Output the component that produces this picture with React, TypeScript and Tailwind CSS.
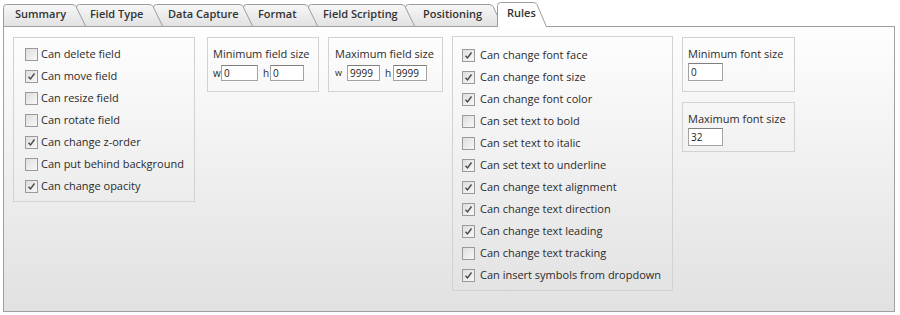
import React from "react";

const tabs = [
  { label: "Summary", w: 83, pl: 12 },
  { label: "Field Type", w: 87, pl: 14 },
  { label: "Data Capture", w: 100, pl: 15 },
  { label: "Format", w: 75, pl: 15 },
  { label: "Field Scripting", w: 107, pl: 15 },
  { label: "Positioning", w: 98, pl: 18 },
];

const fieldRules = [
  { label: "Can delete field", on: false },
  { label: "Can move field", on: true },
  { label: "Can resize field", on: false },
  { label: "Can rotate field", on: false },
  { label: "Can change z-order", on: true },
  { label: "Can put behind background", on: false },
  { label: "Can change opacity", on: true },
];

const textRules = [
  { label: "Can change font face", on: true },
  { label: "Can change font size", on: true },
  { label: "Can change font color", on: true },
  { label: "Can set text to bold", on: false },
  { label: "Can set text to italic", on: false },
  { label: "Can set text to underline", on: true },
  { label: "Can change text alignment", on: true },
  { label: "Can change text direction", on: true },
  { label: "Can change text leading", on: true },
  { label: "Can change text tracking", on: false },
  { label: "Can insert symbols from dropdown", on: true },
];

// tab outline: straight left side, slanted right side
function TabShape({ w, h, active, id }: { w: number; h: number; active?: boolean; id: string }) {
  const d = `M0.5 ${h} V3.5 Q0.5 0.5 3.5 0.5 H${w - 14} Q${w - 11} 0.5 ${w - 10} 2.5 L${w - 0.5} ${h}`;
  return (
    <svg className="absolute inset-0" width={w} height={h} viewBox={`0 0 ${w} ${h}`}>
      <defs>
        <linearGradient id={id} x1="0" y1="0" x2="0" y2="1">
          <stop offset="0" stopColor={active ? "#ffffff" : "#f7f7f7"} />
          <stop offset="1" stopColor={active ? "#ffffff" : "#e2e2e2"} />
        </linearGradient>
      </defs>
      <path d={d} fill={`url(#${id})`} stroke="#9c9c9c" strokeWidth="1" />
      {active && <rect x="1" y={h - 1} width={w - 2} height="1" fill="#ffffff" />}
    </svg>
  );
}

function Check({ on }: { on: boolean }) {
  return (
    <span className="relative flex h-[13px] w-[13px] shrink-0 items-center justify-center border border-[#9a9a9a] bg-gradient-to-br from-[#dedede] to-[#f8f8f8]">
      {on && (
        <svg width="11" height="11" viewBox="0 0 11 11">
          <path d="M2.5 5.8 L4.5 8 L8.5 2.5" fill="none" stroke="#4a4a4a" strokeWidth="1.4" />
        </svg>
      )}
    </span>
  );
}

function Row({ label, on, gap }: { label: string; on: boolean; gap: string }) {
  return (
    <div className={`flex h-[22px] items-center ${gap}`}>
      <Check on={on} />
      <span className="whitespace-nowrap">{label}</span>
    </div>
  );
}

function Field({ value, w, h }: { value: string; w: string; h: string }) {
  return (
    <div className={`${w} ${h} flex items-center border border-[#a3a3a3] border-t-[#7f7f7f] bg-white pl-[2px] text-[10px] leading-none text-[#222]`}>
      {value}
    </div>
  );
}

export default function App() {
  return (
    <div className="h-[315px] w-[900px] bg-white text-[11px] text-[#2b2b2b]" style={{ fontFamily: '"Open Sans", "Liberation Sans", sans-serif' }}>
      {/* tab strip */}
      <div className="relative z-10 flex h-[26px] items-end pl-[3px]">
        {tabs.map((t, i) => (
          <div
            key={t.label}
            className={`relative h-[22px] shrink-0 ${i > 0 ? "-ml-[10px]" : ""}`}
            style={{ width: t.w, zIndex: 10 - i, paddingLeft: t.pl }}
          >
            <TabShape w={t.w} h={22} id={`tab${i}`} />
            <span className="relative flex h-full items-center whitespace-nowrap pb-[1px] font-semibold text-[#333]">{t.label}</span>
          </div>
        ))}
        <div className="relative z-20 -mb-[1px] -ml-[6px] h-[25px] w-[50px] shrink-0 pl-[10px]">
          <TabShape w={50} h={25} active id="tabactive" />
          <span className="relative flex h-full items-center whitespace-nowrap pb-[2px] font-semibold text-[#333]">Rules</span>
        </div>
      </div>

      {/* panel */}
      <div className="ml-[3px] h-[286px] w-[892px] border border-[#9f9f9f] bg-gradient-to-b from-[#fefefe] to-[#e1e1e1] pl-[9px] pt-[10px]">
        <div className="flex items-start">
          <div className="w-[182px] border border-[#d2d2d2] pb-[4px] pl-[11px] pt-[5px]">
            {fieldRules.map((r) => (
              <Row key={r.label} label={r.label} on={r.on} gap="gap-[3px]" />
            ))}
          </div>

          <div className="ml-[12px] h-[55px] w-[112px] border border-[#d2d2d2] pl-[5px] pt-[8px]">
            <div className="whitespace-nowrap leading-[16px]">Minimum field size</div>
            <div className="mt-[3px] flex items-center">
              <span className="w-[8px] text-[10px]">w</span>
              <Field value="0" w="w-[37px]" h="h-[16px]" />
              <span className="ml-[5px] w-[7px] text-[10px]">h</span>
              <Field value="0" w="w-[34px]" h="h-[16px]" />
            </div>
          </div>

          <div className="ml-[9px] h-[55px] w-[115px] border border-[#d2d2d2] pl-[6px] pt-[8px]">
            <div className="whitespace-nowrap leading-[16px]">Maximum field size</div>
            <div className="mt-[3px] flex items-center">
              <span className="w-[12px] text-[9px]">w</span>
              <Field value="9999" w="w-[33px]" h="h-[16px]" />
              <span className="ml-[5px] w-[8px] text-[10px]">h</span>
              <Field value="9999" w="w-[34px]" h="h-[16px]" />
            </div>
          </div>

          <div className="-mt-[1px] ml-[9px] w-[221px] border border-[#d2d2d2] pb-[4px] pl-[9px] pt-[7px]">
            {textRules.map((r) => (
              <Row key={r.label} label={r.label} on={r.on} gap="gap-[5px]" />
            ))}
          </div>

          <div className="ml-[9px] flex flex-col gap-[10px]">
            <div className="h-[55px] w-[113px] border border-[#d2d2d2] pl-[5px] pt-[8px]">
              <div className="whitespace-nowrap leading-[16px]">Minimum font size</div>
              <div className="mt-[1px]">
                <Field value="0" w="w-[35px]" h="h-[18px]" />
              </div>
            </div>
            <div className="h-[50px] w-[113px] border border-[#d2d2d2] pl-[5px] pt-[8px]">
              <div className="whitespace-nowrap leading-[16px]">Maximum font size</div>
              <div className="mt-[1px]">
                <Field value="32" w="w-[35px]" h="h-[18px]" />
              </div>
            </div>
          </div>
        </div>
      </div>
    </div>
  );
}
